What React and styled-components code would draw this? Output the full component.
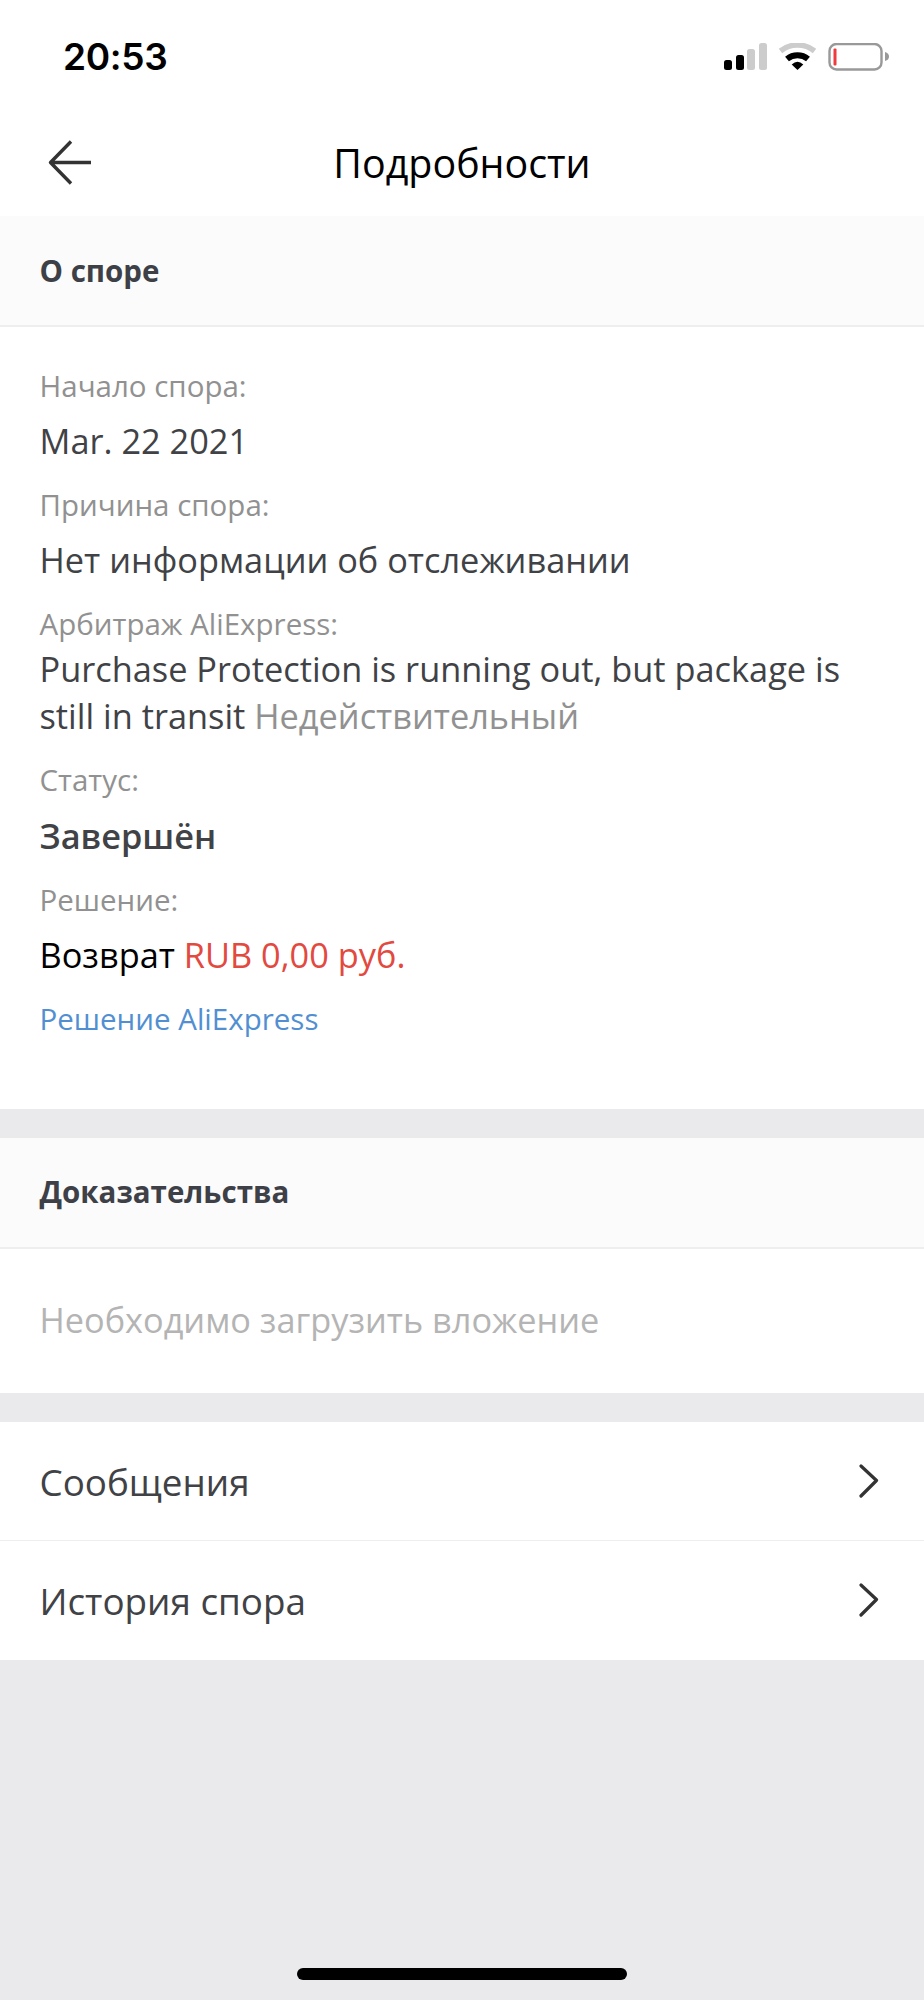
import React from 'react'
import styled, { createGlobalStyle, ThemeProvider } from 'styled-components'

const theme = {
	dark: '#3e4047',
	text: '#404246',
	label: '#919191',
	placeholder: '#b4b4b4',
	danger: '#e2493f',
	link: '#528fd2',
	gap: '#eaeaec',
	line: '#eeeeef'
}

const GlobalStyle = createGlobalStyle`
	* {
		box-sizing: border-box;
	}

	body {
		margin: 0;
		background: ${theme.gap};
		font-family: 'Open Sans', 'Noto Sans', sans-serif;
	}

	h1, h2, p, dl, dt, dd {
		margin: 0;
	}
`

const Screen = styled.div`
	display: flex;
	flex-direction: column;
	width: 924px;
	height: 2000px;
	background: ${props => props.theme.gap};
`

const StatusBar = styled.div`
	display: flex;
	align-items: center;
	justify-content: space-between;
	height: 112px;
	padding: 2px 34px 0 63px;
	background: #fff;
`

const Clock = styled.div`
	font-family: Inter, sans-serif;
	font-size: 37px;
	font-weight: 600;
	line-height: 48px;
	letter-spacing: -0.3px;
	color: #000;
`

const Indicators = styled.svg`
	width: 166px;
	height: 28px;
`

const NavBar = styled.header`
	display: grid;
	grid-template-columns: 48px 1fr 48px;
	align-items: center;
	height: 104px;
	padding: 0 46px 3px;
	background: #fff;
`

const BackButton = styled.button`
	display: flex;
	padding: 0;
	border: 0;
	background: none;
`

const Title = styled.h1`
	font-size: 39.4px;
	font-weight: 400;
	line-height: 56px;
	text-align: center;
	color: #000;
`

const SectionTitle = styled.h2`
	height: 111px;
	padding-left: 39.5px;
	border-bottom: 2px solid ${props => props.theme.line};
	background: #fbfbfb;
	font-size: 29.5px;
	font-weight: 700;
	line-height: ${props => (props.$first ? 110 : 108)}px;
	color: ${props => props.theme.dark};
`

const Details = styled.div`
	height: 782px;
	padding: 38px 39.5px 0;
	background: #fff;
`

const Field = styled.dl`
	margin-bottom: 20px;
`

const Label = styled.dt`
	margin-bottom: ${props => (props.$tight ? 0 : '10.2px')};
	font-size: 29.5px;
	line-height: 42px;
	color: ${props => props.theme.label};
`

const Value = styled.dd`
	font-size: 34.35px;
	font-weight: ${props => (props.$strong ? 600 : 400)};
	line-height: 47px;
	color: ${props => (props.$black ? '#000' : props.theme.text)};
`

const Muted = styled.span`
	color: ${props => props.theme.label};
`

const Amount = styled.span`
	color: ${props => props.theme.danger};
`

const Link = styled.a`
	display: block;
	font-size: 29.5px;
	line-height: 42px;
	color: ${props => props.theme.link};
`

const Gap = styled.div`
	height: 29px;
`

const Placeholder = styled.p`
	height: 144px;
	padding-left: 39.5px;
	background: #fff;
	font-size: 34.3px;
	line-height: 142px;
	color: ${props => props.theme.placeholder};
`

const MenuItem = styled.div`
	display: flex;
	align-items: center;
	justify-content: space-between;
	height: 119px;
	padding: 0 45px 0 39.5px;
	background: #fff;
	font-size: 36.8px;
	color: ${props => props.theme.text};

	&:not(:last-child) {
		padding-top: 1px;
		border-bottom: 1px solid ${props => props.theme.line};
	}
`

const StatusIcons = () => (
	<Indicators viewBox="0 0 166 28">
		<rect x="0" y="17" width="8" height="10" rx="2.5" fill="#000" />
		<rect x="12" y="12" width="8" height="15" rx="2.5" fill="#000" />
		<rect x="23" y="6" width="8" height="21" rx="2.5" fill="#ccc" />
		<rect x="35" y="0" width="8" height="27" rx="2.5" fill="#ccc" />
		<path d="M56.5 8a27 27 0 0 1 34 0" fill="none" stroke="#ccc" strokeWidth="5.5" />
		<path d="M63 16a16.5 16.5 0 0 1 21 0" fill="none" stroke="#000" strokeWidth="6" />
		<path d="M73.5 27l-5.8-5.5q5.8-5.5 11.6 0z" fill="#000" />
		<rect x="105.5" y="1" width="52" height="25.5" rx="7" fill="none" stroke="#999" strokeWidth="2.4" />
		<rect x="109.5" y="5.5" width="3" height="17" rx="1" fill="#ef3a3e" />
		<path d="M161 9q4 1 4 4.5t-4 4.5z" fill="#999" />
	</Indicators>
)

const BackIcon = () => (
	<svg width="48" height="48" viewBox="0 0 48 48" fill="none" stroke="#333" strokeWidth="3.4">
		<path d="M25 2.5L4.5 23.500L25 44.500M4.500 23.500H45" strokeLinejoin="round" />
	</svg>
)

const Chevron = () => (
	<svg width="20" height="36" viewBox="0 0 20 36" fill="none" stroke="#333" strokeWidth="3.2">
		<path d="M2 2L17.5 16.500L2 32" strokeLinecap="round" strokeLinejoin="round" />
	</svg>
)

const HomeArea = styled.div`
	display: flex;
	flex: 1;
	align-items: flex-end;
	justify-content: center;
	padding-bottom: 20px;
`

const HomeIndicator = styled.div`
	width: 330px;
	height: 12px;
	border-radius: 6px;
	background: #000;
`

const menu = ['Сообщения', 'История спора']

const App = () => (
	<ThemeProvider theme={theme}>
		<GlobalStyle />
		<Screen>
			<StatusBar>
				<Clock>20:53</Clock>
				<StatusIcons />
			</StatusBar>
			<NavBar>
				<BackButton aria-label="Назад">
					<BackIcon />
				</BackButton>
				<Title>Подробности</Title>
			</NavBar>

			<SectionTitle $first>О споре</SectionTitle>
			<Details>
				<Field>
					<Label>Начало спора:</Label>
					<Value>Mar. 22 2021</Value>
				</Field>
				<Field>
					<Label>Причина спора:</Label>
					<Value>Нет информации об отслеживании</Value>
				</Field>
				<Field>
					<Label $tight>Арбитраж AliExpress:</Label>
					<Value>
						Purchase Protection is running out, but package is still in transit{' '}
						<Muted>Недействительный</Muted>
					</Value>
				</Field>
				<Field>
					<Label>Статус:</Label>
					<Value $strong>Завершён</Value>
				</Field>
				<Field>
					<Label>Решение:</Label>
					<Value $black>
						Возврат <Amount>RUB 0,00 руб.</Amount>
					</Value>
				</Field>
				<Link>Решение AliExpress</Link>
			</Details>

			<Gap />
			<SectionTitle>Доказательства</SectionTitle>
			<Placeholder>Необходимо загрузить вложение</Placeholder>

			<Gap />
			<nav>
				{menu.map(item => (
					<MenuItem key={item}>
						{item}
						<Chevron />
					</MenuItem>
				))}
			</nav>
			<HomeArea>
				<HomeIndicator />
			</HomeArea>
		</Screen>
	</ThemeProvider>
)

export default App
